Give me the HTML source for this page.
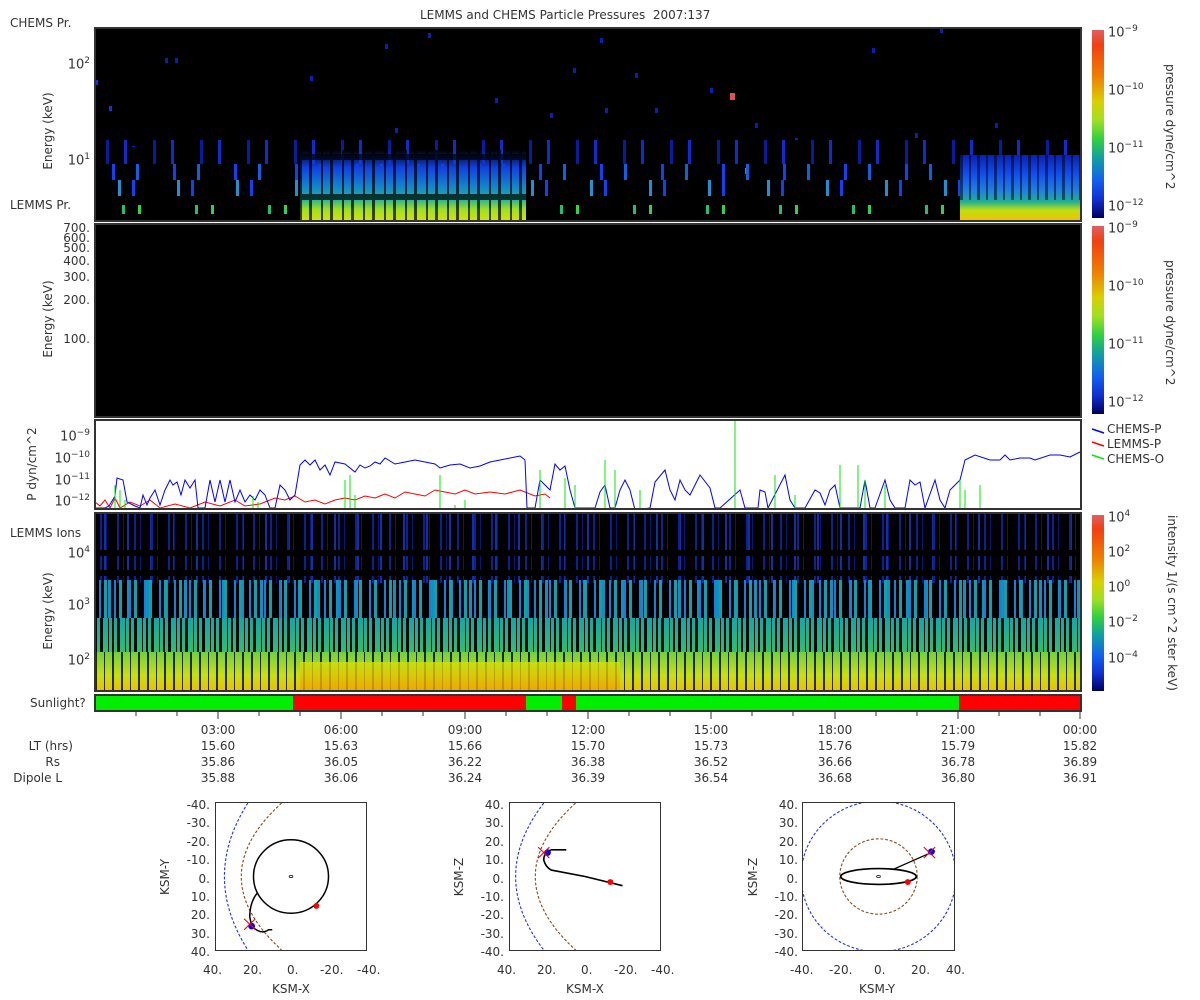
<!DOCTYPE html>
<html><head><meta charset="utf-8"><style>
*{margin:0;padding:0;box-sizing:border-box}
body{width:1200px;height:1000px;background:#fff;position:relative;overflow:hidden;font-family:"DejaVu Sans","Liberation Sans",sans-serif;color:#333;font-size:12px}
.a{position:absolute}
.box{position:absolute;border:2px solid #333}
.lbl{position:absolute;white-space:nowrap}
.rot{position:absolute;transform:rotate(-90deg);transform-origin:center;white-space:nowrap}
.rot90{position:absolute;transform:rotate(90deg);transform-origin:center;white-space:nowrap}
.cb{position:absolute;width:12px;background:linear-gradient(to bottom,#e06060 0%,#f04010 8%,#f08000 25%,#d8d000 38%,#a0e020 48%,#30d040 58%,#10a0a0 68%,#1060f0 80%,#1030d0 90%,#000060 100%)}
.r{text-align:right}
sup{font-size:9px}
</style></head><body>

<div class="lbl" style="left:420px;top:8px;font-size:12px">LEMMS and CHEMS Particle Pressures&nbsp; 2007:137</div>

<!-- Panel 1 -->
<div class="a" style="left:95px;top:28px;width:986px;height:193px;background:#000"></div>
<svg class="a" style="left:95px;top:28px" width="986" height="193">
<g fill="#1530e0">
<rect x="0" y="52" width="3" height="5"/><rect x="14" y="78" width="3" height="5"/><rect x="37" y="116" width="3" height="5" fill="#0a20b0"/>
<rect x="70" y="30" width="3" height="5" fill="#0a20b0"/><rect x="80" y="30" width="3" height="5" fill="#0a20b0"/>
<rect x="215" y="48" width="3" height="5" fill="#0a20b0"/><rect x="333" y="5" width="3" height="5" fill="#0a20b0"/>
<rect x="290" y="16" width="3" height="5" fill="#0a20b0"/><rect x="478" y="40" width="3" height="5" fill="#0a20b0"/>
<rect x="505" y="10" width="3" height="5" fill="#0a20b0"/><rect x="540" y="45" width="3" height="5" fill="#0a20b0"/>
<rect x="560" y="80" width="3" height="5" fill="#0a20b0"/><rect x="510" y="80" width="3" height="5" fill="#0a20b0"/>
<rect x="455" y="85" width="3" height="5" fill="#0a20b0"/><rect x="777" y="20" width="3" height="5" fill="#0a20b0"/>
<rect x="845" y="0" width="3" height="5" fill="#0a20b0"/><rect x="615" y="60" width="3" height="5" fill="#0a20b0"/>
<rect x="660" y="95" width="3" height="5" fill="#0a20b0"/><rect x="700" y="110" width="3" height="5" fill="#0a20b0"/>
<rect x="820" y="105" width="3" height="5" fill="#0a20b0"/><rect x="900" y="95" width="3" height="5" fill="#0a20b0"/>
<rect x="400" y="70" width="3" height="5" fill="#0a20b0"/><rect x="300" y="100" width="3" height="5" fill="#0a20b0"/>
<rect x="635" y="65" width="5" height="7" fill="#e05050"/><rect x="650" y="140" width="4" height="6" fill="#e05050"/>
</g>
</svg>
<div class="a" style="left:95px;top:140px;width:986px;height:24px;background:repeating-linear-gradient(90deg,transparent 0 11px,#0a20b0 11px 14px,transparent 14px 29px,#1530e0 29px 32px,transparent 32px 47px),repeating-linear-gradient(0deg,#000 0 8px,transparent 8px 9px);opacity:.9"></div>
<div class="a" style="left:95px;top:164px;width:986px;height:16px;background:repeating-linear-gradient(90deg,transparent 0 17px,#1540f0 17px 20px,transparent 20px 41px,#1060e0 41px 44px,transparent 44px 61px)"></div>
<div class="a" style="left:95px;top:180px;width:986px;height:16px;background:repeating-linear-gradient(90deg,transparent 0 23px,#2090d0 23px 26px,transparent 26px 37px,#1540f0 37px 40px,transparent 40px 59px)"></div>
<div class="a" style="left:95px;top:205px;width:986px;height:9px;background:repeating-linear-gradient(90deg,transparent 0 27px,#20c070 27px 30px,transparent 30px 43px,#30d050 43px 46px,transparent 46px 73px)"></div>
<div class="a" style="left:300px;top:150px;width:226px;height:70px;background:linear-gradient(to bottom,transparent 0,#1040e0 25%,#1080d0 50%,#20b0a0 70%,#a0e020 85%,#d0e010 100%)"></div>
<div class="a" style="left:300px;top:150px;width:226px;height:70px;background:repeating-linear-gradient(90deg,#000 0 2px,transparent 2px 9px,#000 9px 12px,transparent 12px 21px),repeating-linear-gradient(0deg,transparent 0 20px,#000 20px 26px,transparent 26px 40px);opacity:.7"></div>
<div class="a" style="left:960px;top:155px;width:120px;height:65px;background:linear-gradient(to bottom,#0a20b0 0,#1050f0 30%,#2080e0 55%,#20b090 72%,#c0e010 85%,#f0c000 100%)"></div>
<div class="a" style="left:960px;top:155px;width:120px;height:45px;background:repeating-linear-gradient(90deg,#000 0 3px,transparent 3px 9px,#000 9px 11px,transparent 11px 17px);opacity:.5"></div>
<div class="box" style="left:94px;top:27px;width:988px;height:195px"></div>
<div class="lbl" style="left:10px;top:16px">CHEMS Pr.</div>
<div class="lbl" style="left:10px;top:198px">LEMMS Pr.</div>
<div class="lbl r" style="left:50px;top:56px;width:40px;font-size:13px">10<sup>2</sup></div>
<div class="lbl r" style="left:50px;top:152px;width:40px;font-size:13px">10<sup>1</sup></div>
<div class="rot" style="left:8px;top:124px;width:80px;text-align:center">Energy (keV)</div>
<div class="cb" style="left:1092px;top:30px;height:188px"></div>
<div class="lbl" style="left:1108px;top:24px;font-size:13px">10<sup>−9</sup></div>
<div class="lbl" style="left:1108px;top:82px;font-size:13px">10<sup>−10</sup></div>
<div class="lbl" style="left:1108px;top:140px;font-size:13px">10<sup>−11</sup></div>
<div class="lbl" style="left:1108px;top:198px;font-size:13px">10<sup>−12</sup></div>
<div class="rot90" style="left:1110px;top:117px;width:120px;text-align:center">pressure dyne/cm^2</div>

<!-- Panel 2 -->
<div class="a" style="left:95px;top:224px;width:986px;height:193px;background:#000"></div>
<div class="box" style="left:94px;top:223px;width:988px;height:195px"></div>
<div class="lbl r" style="left:40px;top:223px;width:50px;line-height:10px;font-size:12px">700.<br>600.<br>500.</div>
<div class="lbl r" style="left:40px;top:254px;width:50px">400.</div>
<div class="lbl r" style="left:40px;top:270px;width:50px">300.</div>
<div class="lbl r" style="left:40px;top:293px;width:50px">200.</div>
<div class="lbl r" style="left:40px;top:332px;width:50px">100.</div>
<div class="rot" style="left:8px;top:312px;width:80px;text-align:center">Energy (keV)</div>
<div class="cb" style="left:1092px;top:226px;height:188px"></div>
<div class="lbl" style="left:1108px;top:220px;font-size:13px">10<sup>−9</sup></div>
<div class="lbl" style="left:1108px;top:278px;font-size:13px">10<sup>−10</sup></div>
<div class="lbl" style="left:1108px;top:336px;font-size:13px">10<sup>−11</sup></div>
<div class="lbl" style="left:1108px;top:394px;font-size:13px">10<sup>−12</sup></div>
<div class="rot90" style="left:1110px;top:313px;width:120px;text-align:center">pressure dyne/cm^2</div>

<!-- Panel 3 -->
<svg class="a" style="left:95px;top:420px" width="986" height="90">
<g fill="none" stroke-width="1">
<polyline stroke="#ff0000" points="0,82 5,86 10,80 15,88 20,78 25,88 35,82 45,86 55,80 65,88 80,84 95,88 110,82 125,86 140,80 150,86 165,84 180,78 190,80 200,76 210,82 220,80 230,84 240,80 250,78 260,80 270,76 280,78 290,74 300,78 310,72 320,74 330,76 340,70 350,72 360,74 370,70 380,74 395,72 410,74 425,70 440,76 450,74 455,78"/>
<polyline stroke="#0000ff" points="0,88 10,88 14,86 20,76 22,58 28,60 32,82 40,86 45,88 48,75 52,85 55,78 60,70 65,85 70,70 75,60 78,65 82,62 86,75 90,60 95,68 100,60 103,88 110,88 115,60 120,82 125,60 130,82 135,60 140,82 145,70 150,82 155,75 160,80 165,70 170,75 175,88 180,88 185,65 190,70 195,80 200,75 205,45 210,40 215,45 220,40 225,50 230,45 235,55 240,42 250,44 260,52 265,45 270,48 275,46 280,42 285,44 290,38 300,44 310,42 320,40 330,42 340,44 345,48 355,45 365,44 375,48 385,46 395,42 405,40 415,38 425,36 430,40 432,88 440,88 445,60 455,70 460,44 465,50 470,46 475,70 480,88 490,88 500,88 505,72 510,65 515,88 520,88 525,70 530,60 535,70 540,90 555,88 560,62 570,50 575,70 580,80 585,60 590,70 595,75 605,55 615,68 620,88 625,88 645,70 650,88 655,88 663,88 665,70 670,72 673,88 690,55 695,80 700,88 710,88 720,70 725,73 730,85 735,70 740,65 745,88 750,88 765,88 770,60 775,88 780,88 790,60 795,80 800,88 810,88 815,60 820,65 825,62 830,88 840,60 845,80 850,88 855,70 865,60 870,40 880,35 895,40 905,40 910,35 915,40 925,38 935,38 940,40 955,35 965,35 975,37 985,32"/>
<g stroke="#00ee00"><path d="M20 90V65M25 90V70M30 90V80M158 90V76M163 90V82M250 90V60M255 90V55M260 90V75M345 90V55M360 90V85M370 90V80M445 90V50M470 90V58M480 90V65M510 90V40M520 90V50M545 90V70M640 90V0M680 90V55M700 90V75M745 90V45M763 90V45M770 90V60M790 90V65M865 90V60M870 90V70M885 90V65"/></g>
</g>
</svg>
<div class="box" style="left:94px;top:419px;width:988px;height:91px"></div>
<div class="lbl r" style="left:40px;top:428px;width:50px;font-size:13px">10<sup>−9</sup></div>
<div class="lbl r" style="left:40px;top:450px;width:50px;font-size:13px">10<sup>−10</sup></div>
<div class="lbl r" style="left:40px;top:472px;width:50px;font-size:13px">10<sup>−11</sup></div>
<div class="lbl r" style="left:40px;top:493px;width:50px;font-size:13px">10<sup>−12</sup></div>
<div class="rot" style="left:-8px;top:457px;width:80px;text-align:center">P dyn/cm^2</div>
<svg class="a" style="left:1090px;top:424px" width="18" height="40"><path d="M2 5l12 4" stroke="#0000ff" stroke-width="1.5"/><path d="M2 18l12 4" stroke="#ff0000" stroke-width="1.5"/><path d="M2 31l12 4" stroke="#00ee00" stroke-width="1.5"/></svg>
<div class="lbl" style="left:1107px;top:422px;line-height:15px">CHEMS-P<br>LEMMS-P<br>CHEMS-O</div>

<!-- Panel 4 Ions -->
<div class="a" style="left:95px;top:513px;width:986px;height:178px;background:#000"></div>
<div class="a" style="left:95px;top:513px;width:986px;height:70px;background:repeating-linear-gradient(90deg,transparent 0 5px,#1530d0 5px 7px,transparent 7px 11px,#0a20b0 11px 12px,transparent 12px 17px),repeating-linear-gradient(90deg,transparent 0 9px,#2040f0 9px 11px,transparent 11px 23px);opacity:.7"></div>
<div class="a" style="left:95px;top:540px;width:986px;height:50px;background:repeating-linear-gradient(0deg,transparent 0 14px,#000 14px 20px);"></div>
<div class="a" style="left:95px;top:580px;width:986px;height:40px;background:repeating-linear-gradient(90deg,transparent 0 4px,#1580d8 4px 6px,transparent 6px 9px,#10a0b0 9px 12px,transparent 12px 15px),repeating-linear-gradient(90deg,transparent 0 13px,#1090c0 13px 16px,transparent 16px 19px)"></div>
<div class="a" style="left:95px;top:618px;width:986px;height:36px;background:linear-gradient(to bottom,#10a8a8,#30c070)"></div>
<div class="a" style="left:95px;top:618px;width:986px;height:36px;background:repeating-linear-gradient(90deg,#000 0 2px,transparent 2px 5px,#000 5px 8px,transparent 8px 13px,#000 13px 14px,transparent 14px 17px);opacity:.95"></div>
<div class="a" style="left:95px;top:652px;width:986px;height:39px;background:linear-gradient(to bottom,#70d040,#c8e010 60%,#e8c000)"></div>
<div class="a" style="left:95px;top:652px;width:986px;height:39px;background:repeating-linear-gradient(90deg,#000 0 2px,transparent 2px 9px,#000 9px 10px,transparent 10px 17px,#000 17px 19px,transparent 19px 26px);opacity:.8"></div>
<div class="a" style="left:300px;top:662px;width:320px;height:29px;background:linear-gradient(to bottom,#d0e010,#f0a000);opacity:.8"></div>
<div class="box" style="left:94px;top:512px;width:988px;height:180px"></div>
<div class="lbl" style="left:10px;top:526px">LEMMS Ions</div>
<div class="lbl r" style="left:40px;top:545px;width:50px;font-size:13px">10<sup>4</sup></div>
<div class="lbl r" style="left:40px;top:597px;width:50px;font-size:13px">10<sup>3</sup></div>
<div class="lbl r" style="left:40px;top:652px;width:50px;font-size:13px">10<sup>2</sup></div>
<div class="rot" style="left:8px;top:604px;width:80px;text-align:center">Energy (keV)</div>
<div class="cb" style="left:1092px;top:515px;height:176px"></div>
<div class="lbl" style="left:1108px;top:509px;font-size:13px">10<sup>4</sup></div>
<div class="lbl" style="left:1108px;top:544px;font-size:13px">10<sup>2</sup></div>
<div class="lbl" style="left:1108px;top:579px;font-size:13px">10<sup>0</sup></div>
<div class="lbl" style="left:1108px;top:614px;font-size:13px">10<sup>−2</sup></div>
<div class="lbl" style="left:1108px;top:650px;font-size:13px">10<sup>−4</sup></div>
<div class="rot90" style="left:1077px;top:596px;width:190px;text-align:center">intensity 1/(s cm^2 ster keV)</div>

<!-- Sunlight -->
<div class="a" style="left:94px;top:694px;width:988px;height:18px;border:2px solid #333;background:linear-gradient(90deg,#00ee00 0 197px,#ff0000 197px 430px,#00ee00 430px 466px,#ff0000 466px 480px,#00ee00 480px 863px,#ff0000 863px)"></div>
<div class="lbl" style="left:30px;top:696px">Sunlight?</div>
<svg class="a" style="left:95px;top:712px" width="990" height="8"><g stroke="#333"><path d="M41 0v4M82 0v4M123 0v7M164 0v4M205 0v4M246 0v7M287 0v4M328 0v4M370 0v7M411 0v4M452 0v4M493 0v7M534 0v4M575 0v4M616 0v7M657 0v4M698 0v4M740 0v7M781 0v4M822 0v4M863 0v7M904 0v4M945 0v4M985 0v7"/></g></svg>
<div class="a" style="left:0;top:722px;width:1200px;line-height:16px;font-size:12px">
<div class="lbl r" style="left:0;top:16px;width:73px">LT (hrs)</div>
<div class="lbl r" style="left:0;top:32px;width:60px">Rs</div>
<div class="lbl r" style="left:0;top:48px;width:62px">Dipole L</div>
</div>
<div class="a" style="left:188px;top:722px;line-height:16px;text-align:center;width:60px">03:00<br>15.60<br>35.86<br>35.88</div>
<div class="a" style="left:311px;top:722px;line-height:16px;text-align:center;width:60px">06:00<br>15.63<br>36.05<br>36.06</div>
<div class="a" style="left:435px;top:722px;line-height:16px;text-align:center;width:60px">09:00<br>15.66<br>36.22<br>36.24</div>
<div class="a" style="left:558px;top:722px;line-height:16px;text-align:center;width:60px">12:00<br>15.70<br>36.38<br>36.39</div>
<div class="a" style="left:681px;top:722px;line-height:16px;text-align:center;width:60px">15:00<br>15.73<br>36.52<br>36.54</div>
<div class="a" style="left:805px;top:722px;line-height:16px;text-align:center;width:60px">18:00<br>15.76<br>36.66<br>36.68</div>
<div class="a" style="left:928px;top:722px;line-height:16px;text-align:center;width:60px">21:00<br>15.79<br>36.78<br>36.80</div>
<div class="a" style="left:1050px;top:722px;line-height:16px;text-align:center;width:60px">00:00<br>15.82<br>36.89<br>36.91</div>

<!-- Orbit plots -->
<svg class="a" style="left:216px;top:803px;overflow:visible" width="150" height="147" viewBox="-40 -40 80 80" preserveAspectRatio="none">
<g fill="none">
<path d="M-23 -40 Q-48 0 -23 40" stroke="#2030ff" stroke-dasharray="1.5 1" stroke-width="0.6"/>
<path d="M-5 -40 Q-48 0 -5 40" stroke="#8a4a20" stroke-dasharray="1.5 1" stroke-width="0.6"/>
<circle cx="0" cy="0" r="20" stroke="#000" stroke-width="0.8"/>
<ellipse cx="0" cy="0" rx="1" ry="0.6" stroke="#000" stroke-width="0.4"/>
<path d="M-18 9 Q-22 14 -22 22 L-21 27 Q-16 32 -12 29 L-10 29" stroke="#000" stroke-width="0.8"/>
</g>
<circle cx="13.5" cy="16" r="1.6" fill="#f00"/>
<circle cx="-21" cy="27" r="1.8" fill="#0000ee"/>
<path d="M-25 23l6 6M-19 23l-6 6" stroke="#f00" stroke-width="0.6"/>
</svg>
<div class="box" style="left:215px;top:802px;width:152px;height:149px;border-width:1px"></div>
<svg class="a" style="left:510px;top:803px;overflow:visible" width="150" height="147" viewBox="-40 -40 80 80" preserveAspectRatio="none">
<g fill="none">
<path d="M-22 -40 Q-52 0 -22 40" stroke="#2030ff" stroke-dasharray="1.5 1" stroke-width="0.6"/>
<path d="M-5 -40 Q-48 0 -5 40" stroke="#8a4a20" stroke-dasharray="1.5 1" stroke-width="0.6"/>
<path d="M-10 -14.5 L-18 -14.5 Q-22 -13 -22 -9 Q-21 -5 -18 -3.5 L0 0 L20 5" stroke="#000" stroke-width="0.9"/>
</g>
<circle cx="13.5" cy="3" r="1.6" fill="#f00"/>
<circle cx="-20" cy="-13" r="1.8" fill="#0000ee"/>
<path d="M-25 -16l6 6M-19 -16l-6 6" stroke="#f00" stroke-width="0.6"/>
</svg>
<div class="box" style="left:509px;top:802px;width:152px;height:149px;border-width:1px"></div>
<svg class="a" style="left:803px;top:803px;overflow:visible" width="151" height="147" viewBox="-40 -40 80 80" preserveAspectRatio="none">
<clipPath id="c3"><rect x="-40" y="-40" width="80" height="80"/></clipPath>
<g fill="none" clip-path="url(#c3)">
<circle cx="0" cy="0" r="41" stroke="#2030ff" stroke-dasharray="1.5 1" stroke-width="0.6"/>
<circle cx="0" cy="0" r="20.5" stroke="#8a4a20" stroke-dasharray="1.5 1" stroke-width="0.6"/>
<ellipse cx="0" cy="0" rx="20" ry="4.3" stroke="#000" stroke-width="0.9"/>
<ellipse cx="0" cy="0" rx="1" ry="0.6" stroke="#000" stroke-width="0.4"/>
<path d="M8 -4 L30 -14" stroke="#000" stroke-width="0.7"/>
</g>
<circle cx="15.5" cy="3" r="1.6" fill="#f00"/>
<circle cx="28" cy="-13.5" r="1.8" fill="#0000ee"/>
<path d="M24 -16l6 6M30 -16l-6 6" stroke="#f00" stroke-width="0.6"/>
</svg>
<div class="box" style="left:802px;top:802px;width:153px;height:149px;border-width:1px"></div>

<div class="a" style="left:160px;top:796px;width:50px;line-height:18.4px;text-align:right">-40.<br>-30.<br>-20.<br>-10.<br>0.<br>10.<br>20.<br>30.<br>40.</div>
<div class="a" style="left:454px;top:796px;width:50px;line-height:18.4px;text-align:right">40.<br>30.<br>20.<br>10.<br>0.<br>-10.<br>-20.<br>-30.<br>-40.</div>
<div class="a" style="left:748px;top:796px;width:50px;line-height:18.4px;text-align:right">40.<br>30.<br>20.<br>10.<br>0.<br>-10.<br>-20.<br>-30.<br>-40.</div>
<div class="lbl" style="left:203px;top:963px">40.</div><div class="lbl" style="left:243px;top:963px">20.</div><div class="lbl" style="left:287px;top:963px">0.</div><div class="lbl" style="left:320px;top:963px">-20.</div><div class="lbl" style="left:357px;top:963px">-40.</div>
<div class="lbl" style="left:497px;top:963px">40.</div><div class="lbl" style="left:537px;top:963px">20.</div><div class="lbl" style="left:581px;top:963px">0.</div><div class="lbl" style="left:614px;top:963px">-20.</div><div class="lbl" style="left:651px;top:963px">-40.</div>
<div class="lbl" style="left:790px;top:963px">-40.</div><div class="lbl" style="left:829px;top:963px">-20.</div><div class="lbl" style="left:874px;top:963px">0.</div><div class="lbl" style="left:911px;top:963px">20.</div><div class="lbl" style="left:946px;top:963px">40.</div>
<div class="lbl" style="left:272px;top:982px">KSM-X</div>
<div class="lbl" style="left:566px;top:982px">KSM-X</div>
<div class="lbl" style="left:859px;top:982px">KSM-Y</div>
<div class="rot" style="left:140px;top:870px;width:50px;text-align:center">KSM-Y</div>
<div class="rot" style="left:434px;top:870px;width:50px;text-align:center">KSM-Z</div>
<div class="rot" style="left:728px;top:870px;width:50px;text-align:center">KSM-Z</div>
</body></html>
